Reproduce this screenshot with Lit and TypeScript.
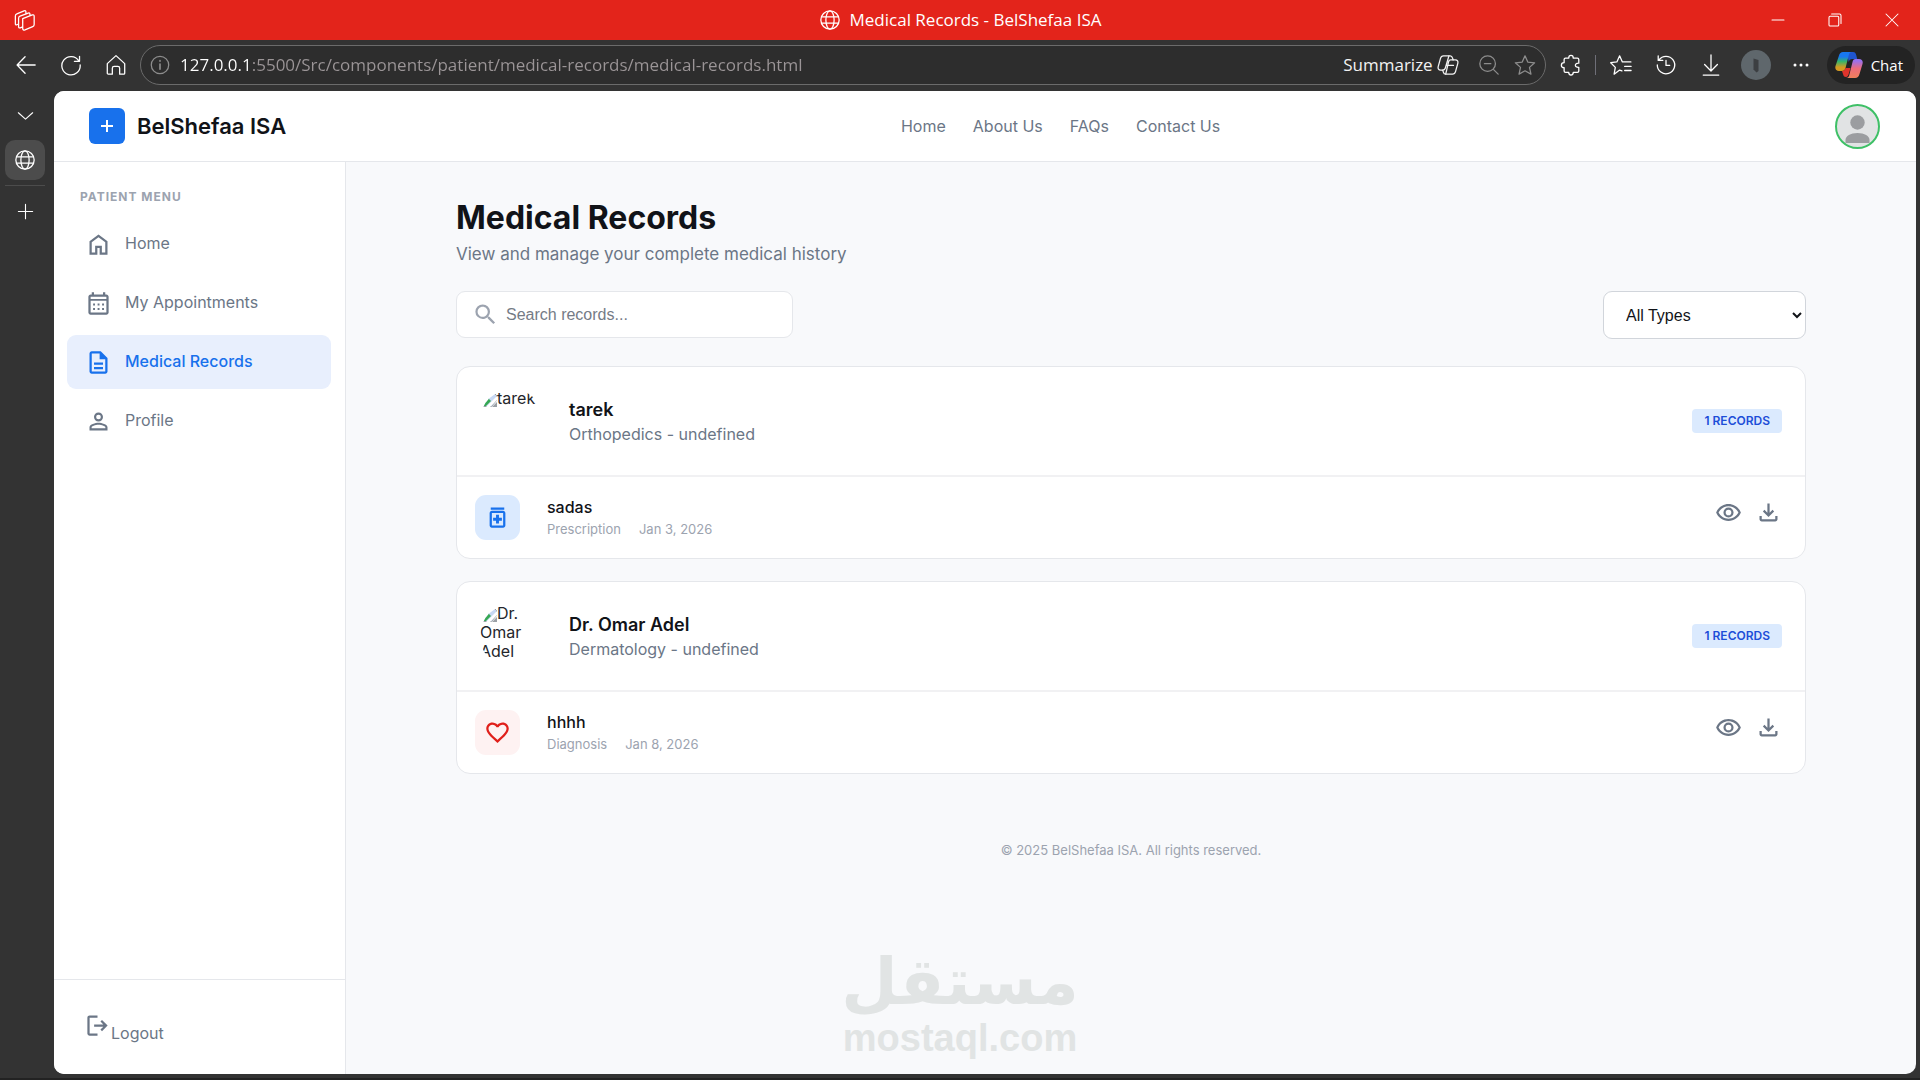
import { LitElement, html, svg, css, type TemplateResult } from "lit";
import { customElement, property } from "lit/decorators.js";
import { classMap } from "lit/directives/class-map.js";

const solid = (d: string) => html`<svg viewBox="0 0 24 24" fill="currentColor" aria-hidden="true"><path d=${d}></path></svg>`;
const line = (content: TemplateResult) =>
  html`<svg viewBox="0 0 24 24" fill="none" stroke="currentColor" stroke-width="1.4" stroke-linecap="round" stroke-linejoin="round" aria-hidden="true">${content}</svg>`;

const icons = {
  home: solid("M6 19h3v-6h6v6h3v-9l-6-4.5L6 10v9Zm-2 2V9l8-6 8 6v12h-7v-6h-2v6H4Z"),
  calendar: solid(
    "M19 4h-1V2h-2v2H8V2H6v2H5c-1.1 0-2 .9-2 2v14c0 1.1.9 2 2 2h14c1.1 0 2-.9 2-2V6c0-1.1-.9-2-2-2Zm0 16H5V9.5h14V20Zm0-12H5V6h14v2ZM7.2 12h1.7v1.7H7.2V12Zm4 0h1.7v1.7h-1.7V12Zm4 0h1.7v1.7h-1.7V12Zm-8 4h1.7v1.7H7.2V16Zm4 0h1.7v1.7h-1.7V16Zm4 0h1.7v1.7h-1.7V16Z"
  ),
  document: solid("M8 16h8v2H8v-2Zm0-4h8v2H8v-2Zm6-10H6c-1.1 0-2 .9-2 2v16c0 1.1.9 2 2 2h12c1.1 0 2-.9 2-2V8l-6-6Zm4 18H6V4h7v5h5v11Z"),
  person: solid(
    "M12 5.9a2.1 2.1 0 1 1 0 4.2 2.1 2.1 0 0 1 0-4.2m0 9c2.97 0 6.1 1.46 6.1 2.1v1.1H5.9V17c0-.64 3.13-2.1 6.1-2.1M12 4C9.79 4 8 5.79 8 8s1.79 4 4 4 4-1.79 4-4-1.79-4-4-4Zm0 9c-2.67 0-8 1.34-8 4v3h16v-3c0-2.66-5.33-4-8-4Z"
  ),
  logout: solid("M5 21q-.825 0-1.413-.587T3 19V5q0-.825.587-1.413T5 3h7v2H5v14h7v2H5Zm11-4-1.375-1.45 2.55-2.55H9v-2h8.175l-2.55-2.55L16 7l5 5-5 5Z"),
  search: solid(
    "M15.5 14h-.79l-.28-.27A6.47 6.47 0 0 0 16 9.5 6.5 6.5 0 1 0 9.5 16c1.61 0 3.09-.59 4.23-1.57l.27.28v.79l5 4.99L20.49 19l-4.99-5Zm-6 0C7.01 14 5 11.99 5 9.5S7.01 5 9.5 5 14 7.01 14 9.5 11.99 14 9.5 14Z"
  ),
  medication: solid("M6 3h12v2H6V3Zm11 3H7c-1.1 0-2 .9-2 2v11c0 1.1.9 2 2 2h10c1.1 0 2-.9 2-2V8c0-1.1-.9-2-2-2Zm0 13H7V8h10v11ZM10.7 9.6h2.6v2.6h2.6v2.6h-2.6v2.6h-2.6v-2.6H8.100v-2.6h2.6V9.6Z"),
  heart: solid(
    "M16.5 3c-1.74 0-3.41.81-4.5 2.09C10.91 3.81 9.24 3 7.5 3 4.42 3 2 5.42 2 8.5c0 3.78 3.4 6.860 8.55 11.54L12 21.35l1.45-1.32C18.600 15.36 22 12.280 22 8.500 22 5.420 19.580 3 16.500 3Zm-4.4 15.550-.1.100-.1-.100C7.140 14.240 4 11.390 4 8.500 4 6.500 5.500 5 7.500 5c1.540 0 3.040.990 3.570 2.360h1.870C13.460 5.990 14.960 5 16.500 5c2 0 3.500 1.500 3.500 3.500 0 2.890-3.140 5.740-7.900 10.050Z"
  ),
  eye: solid(
    "M12 6.500c3.790 0 7.170 2.130 8.820 5.500-1.650 3.370-5.020 5.500-8.820 5.500S4.830 15.370 3.180 12C4.830 8.630 8.210 6.500 12 6.500m0-2C7 4.500 2.730 7.610 1 12c1.730 4.390 6 7.500 11 7.500s9.270-3.110 11-7.500c-1.730-4.390-6-7.500-11-7.500Zm0 5a2.500 2.500 0 0 1 0 5 2.500 2.500 0 0 1 0-5m0-2a4.500 4.500 0 1 0 0 9 4.500 4.500 0 0 0 0-9Z"
  ),
  download: solid("M12 16l-5-5 1.400-1.450 2.600 2.600V4h2v8.150l2.600-2.600L17 11l-5 5Zm-6 4q-.825 0-1.413-.588T4 18v-3h2v3h12v-3h2v3q0 .825-.588 1.413T18 20H6Z"),
  globe: line(svg`<circle cx="12" cy="12" r="10"/><ellipse cx="12" cy="12" rx="4.500" ry="10"/><path d="M2.800 8.500h18.400M2.800 15.500h18.400"/>` as TemplateResult),
  back: line(svg`<path d="M22 12H2.500M11 3 2.300 12 11 21"/>` as TemplateResult),
  refresh: line(svg`<path d="M20.500 7.500A10 10 0 1 0 22 12M21.300 2.500v5.500h-5.600"/>` as TemplateResult),
  house: line(svg`<path d="M2.500 10.500 12 1.800l9.500 8.700V21a1 1 0 0 1-1 1H16v-6.500a2 2 0 0 0-2-2h-4a2 2 0 0 0-2 2V22H3.500a1 1 0 0 1-1-1Z"/>` as TemplateResult),
  info: line(svg`<circle cx="12" cy="12" r="9.500"/><path d="M12 11v5.500M12 7.300v.5" stroke-width="1.800"/>` as TemplateResult),
  chevron: line(svg`<path d="M3 8.500l9 8 9-8"/>` as TemplateResult),
  plus: line(svg`<path d="M12 3v18M3 12h18"/>` as TemplateResult),
  zoomOut: line(svg`<circle cx="10.500" cy="10.500" r="8.500"/><path d="M17 17l5 5M7 10.500h7"/>` as TemplateResult),
  star: line(svg`<path d="M12 2l3 6.800 7.500.8-5.600 5 1.600 7.400L12 18.300 5.500 22l1.600-7.400-5.600-5L9 8.800Z"/>` as TemplateResult),
  puzzle: line(
    svg`<path d="M6 4.500h3.500c0-4 5-4 5 0H19a1.500 1.500 0 0 1 1.500 1.500v4c-5-.5-5 5 0 4.500v4A1.500 1.500 0 0 1 19 20h-4.500c0 4-5 4-5 0H6a1.500 1.500 0 0 1-1.500-1.500V15c-4 0-4-5.500 0-5.500V6A1.500 1.500 0 0 1 6 4.500Z"/>` as TemplateResult
  ),
  favorites: line(svg`<path d="M13 18.500 10.500 17.500 4.500 22l1.300-7.400L.8 9.500l6.700-.8L10.500 2l3 6.700h9.300M16 13.500h7M16 18h7"/>` as TemplateResult),
  history: line(svg`<path d="M4.300 6.500A9.500 9.500 0 1 1 2.500 12M3.500 2v5H8.500M12 7v5.500h4"/>` as TemplateResult),
  save: line(svg`<path d="M12 1v17M5 11.500l7 7 7-7M3.500 23h17"/>` as TemplateResult),
  dots: html`<svg viewBox="0 0 24 24" fill="currentColor" aria-hidden="true"><circle cx="4" cy="12" r="2"></circle><circle cx="12" cy="12" r="2"></circle><circle cx="20" cy="12" r="2"></circle></svg>`,
  copilot: line(
    svg`<path d="M7 2h7.500c1.500 0 2 .9 2.500 2.500l.6 2H20c2.200 0 3.300 1.600 2.700 3.700l-2.500 9C19.600 21.200 18.500 22 17 22H9.500C8 22 7.300 21.200 7 20l-.8-2.500H4c-2.200 0-3.300-1.600-2.700-3.700l2.500-9C4.300 2.900 5.500 2 7 2Z"/><path d="M13 2 9 15.500c-.4 1.300-1.200 2-2.800 2M17.600 6.500H15c-1.400 0-2 .8-2.400 2L9.500 22M11 12.500h7"/>` as TemplateResult
  ),
  minimize: line(svg`<path d="M4 12h16"/>` as TemplateResult),
  restore: line(svg`<rect x="4" y="7" width="13" height="13" rx="1.500"/><path d="M7.500 4H18a2 2 0 0 1 2 2v10.500"/>` as TemplateResult),
  close: line(svg`<path d="M4 4l16 16M20 4 4 20"/>` as TemplateResult),
  workspaces: line(
    svg`<path d="M9.500 10.500 20 6.500c1.300-.4 2 0 2 1.300V17c0 1.200-.5 1.900-1.600 2.300L12 22.800c-1.400.5-2.500 0-2.500-1.600ZM9.500 19.500 6.800 20.500c-1.200.4-1.800-.1-1.800-1.400V10c0-1.200.5-1.800 1.600-2.200L15.500 4.500c1.200-.4 1.900 0 1.900 1.200v1.600M5 16.500l-2 .7c-1 .3-1.500-.1-1.500-1.200V7.500c0-1.200.5-1.800 1.600-2.200L11 2c1.200-.4 2-.1 2 1.200v2"/>` as TemplateResult
  ),
};

const copilotColor = html`<svg class="copilot" viewBox="0 0 28 28" aria-hidden="true">
  <defs>
    <linearGradient id="cool" x1="0" y1="0" x2="0" y2="1">
      <stop offset="0.25" stop-color="#1878f0"></stop><stop offset="0.5" stop-color="#35b56a"></stop><stop offset="0.8" stop-color="#d59b22"></stop>
    </linearGradient>
    <linearGradient id="warm" x1="0" y1="0" x2="0" y2="1">
      <stop offset="0.1" stop-color="#9a70ee"></stop><stop offset="0.5" stop-color="#ee6c7c"></stop><stop offset="1" stop-color="#f0805a"></stop>
    </linearGradient>
  </defs>
  <path fill="#1f55cf" d="M12 1h6c2 0 2.700 1 3.200 3l1 4h-5c-2 0-3 1-3.500 3Z"></path>
  <path fill="url(#cool)" d="M8 1h9c-2 0-2.700 1.200-3.200 3L10.500 17c-.6 2-1.500 3-3.500 3H4c-2.700 0-4.300-2-3.500-5L4 4.500C4.600 2.300 6 1 8 1Z"></path>
  <path fill="#e0342c" d="M7 20c2 0 3-1 3.500-3h5L14 22c-.6 2.500-1.500 4-3 4-2 0-2.500-1-3-3Z"></path>
  <path fill="url(#warm)" d="M20.500 8H24c3 0 4.300 2 3.500 5L24.500 23c-.7 2.500-2 4-4.500 4h-9c2 0 2.800-1.300 3.300-3l3.200-13c.5-2 1.200-3 3-3Z"></path>
</svg>`;

const brokenPicture = html`<svg class="broken" viewBox="0 0 16 16" aria-hidden="true">
  <path fill="#c7d8f4" stroke="#9aa0a6" d="M.5.500h11l4 4v5l-5 6h-10Z"></path>
  <path fill="#36a853" d="M1 15V11l5-5 4 4-5 5Z"></path>
  <path fill="#fff" d="M5 16 16 5v4l-7 7Z"></path>
  <path fill="#9aa0a6" d="M11 16l5-5v5Z"></path>
</svg>`;

interface MedicalRecord {
  title: string;
  kind: "Prescription" | "Diagnosis";
  date: string;
}

const reset = css`
  *, *::before, *::after { box-sizing: border-box; }
  button { border: 0; padding: 0; background: none; color: inherit; font: inherit; cursor: pointer; }
  a { color: inherit; text-decoration: none; }
  svg { display: block; flex: none; }
  h1, h2, h3, p, ul { margin: 0; padding: 0; }
`;

@customElement("record-card")
export class RecordCard extends LitElement {
  @property() doctor = "";
  @property() specialty = "";
  @property({ attribute: false }) records: MedicalRecord[] = [];

  static styles = [
    reset,
    css`
      :host { display: block; background: #fff; border: 1px solid #e5e7eb; border-radius: 14px; }
      .head { display: flex; align-items: center; padding: 22px 23px; border-bottom: 2px solid #f1f1f3; }
      .photo { width: 64px; height: 64px; border-radius: 50%; overflow: hidden; margin-right: 25px; font-size: 16px; line-height: 19px; color: #24262b; }
      .broken { display: inline-block; width: 16px; height: 16px; vertical-align: -3px; margin-left: 1px; }
      .who { flex: 1; padding-top: 2px; }
      h2 { font-size: 18px; font-weight: 600; line-height: 24px; color: #111318; }
      .who p { font-size: 16px; line-height: 24px; color: #6b7686; }
      .badge { background: #dbeafe; color: #1d4ed8; border-radius: 4px; padding: 0 12px; font-size: 12px; font-weight: 600; line-height: 24px; text-transform: uppercase; }
      ul { list-style: none; }
      li { display: flex; align-items: center; padding: 18px; }
      .tile { display: grid; place-items: center; width: 45px; height: 45px; border-radius: 11px; background: #dbeafe; color: #1871ec; margin-right: 27px; }
      .tile.diagnosis { background: #fef2f2; color: #e0201b; }
      svg { width: 27px; height: 27px; }
      .body { flex: 1; }
      h3 { font-size: 16px; font-weight: 500; line-height: 22px; color: #111318; }
      .meta { display: flex; gap: 18px; font-size: 13px; line-height: 22px; color: #9ca3af; }
      .actions { display: flex; align-self: flex-start; gap: 13px; padding: 4px 5px 0 0; color: #6b7686; }
    `,
  ];

  render() {
    return html`
      <div class="head">
        <div class="photo">${brokenPicture}${this.doctor}</div>
        <div class="who">
          <h2>${this.doctor}</h2>
          <p>${this.specialty}</p>
        </div>
        <span class="badge">${this.records.length} Records</span>
      </div>
      <ul>
        ${this.records.map(
          (r) => html`<li>
            <span class=${classMap({ tile: true, diagnosis: r.kind === "Diagnosis" })}>${r.kind === "Diagnosis" ? icons.heart : icons.medication}</span>
            <div class="body">
              <h3>${r.title}</h3>
              <p class="meta"><span>${r.kind}</span><span>${r.date}</span></p>
            </div>
            <div class="actions">
              <button aria-label="View record">${icons.eye}</button>
              <button aria-label="Download record">${icons.download}</button>
            </div>
          </li>`
        )}
      </ul>
    `;
  }
}

@customElement("records-page")
export class RecordsPage extends LitElement {
  private doctors = [
    { name: "tarek", specialty: "Orthopedics - undefined", records: [{ title: "sadas", kind: "Prescription", date: "Jan 3, 2026" }] as MedicalRecord[] },
    { name: "Dr. Omar Adel", specialty: "Dermatology - undefined", records: [{ title: "hhhh", kind: "Diagnosis", date: "Jan 8, 2026" }] as MedicalRecord[] },
  ];
  private menu = [
    { label: "Home", icon: icons.home },
    { label: "My Appointments", icon: icons.calendar },
    { label: "Medical Records", icon: icons.document, active: true },
    { label: "Profile", icon: icons.person },
  ];

  static styles = [
    reset,
    css`
      :host { display: flex; flex-direction: column; background: #f8f9fb; color: #6b7686; font-family: Inter, sans-serif; font-size: 16px; }
      header { display: flex; justify-content: space-between; align-items: center; height: 71px; padding: 0 36px 0 35px; background: #fff; border-bottom: 1px solid #e5e7eb; }
      .brand { display: flex; align-items: center; gap: 12px; font-size: 22px; font-weight: 600; color: #111318; }
      .logo { display: grid; place-items: center; width: 36px; height: 36px; border-radius: 6px; background: #1871ec; color: #fff; }
      .logo svg { width: 16px; height: 16px; }
      .links { display: flex; gap: 27px; }
      .avatar { border-radius: 50%; }
      .avatar svg { width: 45px; height: 45px; }
      .columns { flex: 1; display: grid; grid-template-columns: 292px 1fr; }
      aside { display: flex; flex-direction: column; background: #fff; border-right: 1px solid #e5e7eb; }
      .caption { padding: 25px 26px 0; font-size: 12px; font-weight: 700; line-height: 20px; letter-spacing: 1px; color: #9ca3af; }
      .menu { display: flex; flex-direction: column; gap: 5px; padding: 10px 14px 10px 13px; flex: 1; }
      .menu a { display: flex; align-items: center; gap: 13px; height: 54px; padding: 0 18px; border-radius: 9px; }
      .menu a span { padding-bottom: 3px; }
      .menu a.active { background: #e8effd; color: #1871ec; font-weight: 500; }
      .menu svg, .exit svg, .search svg { width: 27px; height: 27px; }
      .exit { border-top: 1px solid #e5e7eb; height: 95px; padding: 32px 30px; }
      .exit a { display: inline-flex; align-items: flex-start; }
      .exit span { padding-top: 11px; }
      main { padding: 36px 110px; }
      h1 { font-size: 32px; line-height: 40px; font-weight: 700; color: #111318; }
      .lead { margin-top: 4px; font-size: 17px; line-height: 24px; }
      .filters { display: flex; justify-content: space-between; align-items: flex-start; margin: 25px 0 27px; }
      .search { display: flex; align-items: center; width: 337px; height: 47px; padding: 0 15px; gap: 7px; background: #fff; border: 1px solid #e5e7eb; border-radius: 9px; color: #9ca3af; }
      input { flex: 1; min-width: 0; border: 0; padding: 0; outline: 0; background: none; font: 16px "Liberation Sans", Arial, sans-serif; color: #111318; }
      input::placeholder { color: #757b86; }
      select { width: 203px; height: 48px; padding: 0 18px; border: 1px solid #d1d5db; border-radius: 9px; background: #fff; font: 16px "Liberation Sans", Arial, sans-serif; color: #111318; }
      .cards { display: grid; gap: 22px; }
      footer { padding-top: 66px; text-align: center; font-size: 13px; line-height: 20px; color: #9ca3af; }
    `,
  ];

  render() {
    return html`
      <header>
        <a class="brand" href="#"><span class="logo"><svg viewBox="0 0 16 16" stroke="#fff" stroke-width="2" aria-hidden="true"><path d="M8 2v12M2 8h12"></path></svg></span>BelShefaa ISA</a>
        <nav class="links">
          <a href="#">Home</a><a href="#">About Us</a><a href="#">FAQs</a><a href="#">Contact Us</a>
        </nav>
        <button class="avatar" aria-label="Account">
          <svg viewBox="0 0 45 45" aria-hidden="true">
            <circle cx="22.500" cy="22.500" r="21.500" fill="#e1e3e4" stroke="#3fc067" stroke-width="2"></circle>
            <circle cx="22.500" cy="18.500" r="7.200" fill="#9b9da0"></circle>
            <path d="M10.500 39v-3c0-4 5-7 12-7s12 3 12 7v3Z" fill="#9b9da0"></path>
          </svg>
        </button>
      </header>
      <div class="columns">
        <aside>
          <p class="caption">PATIENT MENU</p>
          <nav class="menu">
            ${this.menu.map((m) => html`<a href="#" class=${classMap({ active: !!m.active })}>${m.icon}<span>${m.label}</span></a>`)}
          </nav>
          <div class="exit"><a href="#">${icons.logout}<span>Logout</span></a></div>
        </aside>
        <main>
          <h1>Medical Records</h1>
          <p class="lead">View and manage your complete medical history</p>
          <div class="filters">
            <label class="search">${icons.search}<input type="search" placeholder="Search records..." aria-label="Search records" /></label>
            <select aria-label="Record type"><option>All Types</option><option>Prescription</option><option>Diagnosis</option></select>
          </div>
          <div class="cards">
            ${this.doctors.map((d) => html`<record-card .doctor=${d.name} .specialty=${d.specialty} .records=${d.records}></record-card>`)}
          </div>
          <footer>© 2025 BelShefaa ISA. All rights reserved.</footer>
        </main>
      </div>
    `;
  }
}

@customElement("app-root")
export class AppRoot extends LitElement {
  static styles = [
    reset,
    css`
      :host { position: relative; display: flex; flex-direction: column; min-height: 100vh; background: #333; color: #fff; font-family: "Segoe UI", "Open Sans", sans-serif; font-size: 16px; border-bottom: 2px solid #222; box-sizing: border-box; }
      svg { width: 22px; height: 22px; }
      .titlebar { display: grid; grid-template-columns: 1fr auto 1fr; align-items: center; height: 40px; background: #e3241b; }
      .titlebar > button { justify-self: start; margin-left: 14px; }
      .title { display: flex; align-items: center; gap: 9px; font-size: 17px; line-height: 22px; }
      .window { justify-self: end; display: flex; }
      .window button { display: grid; place-items: center; width: 57px; height: 40px; }
      .window svg { width: 18px; height: 18px; }
      .toolbar { display: flex; align-items: center; height: 51px; padding: 0 5px 1px 3px; }
      .tool { display: grid; place-items: center; width: 45px; height: 40px; }
      .address { flex: 1; display: flex; align-items: center; height: 40px; margin: 0 3px 0 2px; padding: 0 2px 0 8px; border: 1px solid #6b6b6b; border-radius: 20px; background: #2d2d2d; color: #8d8d8d; }
      .address input { flex: 1; min-width: 0; height: 36px; border: 0; outline: 0; padding: 0 0 2px 9px; font: inherit; font-size: 17px; color: transparent; background: linear-gradient(90deg, #fff 79px, #9b9597 79px); -webkit-background-clip: text; background-clip: text; }
      .summarize { display: flex; align-items: center; gap: 4px; margin-right: 12px; color: #f2f2f2; font-size: 17px; line-height: 22px; }
      .address .icon { display: grid; place-items: center; width: 36px; height: 36px; }
      .rule { width: 1px; height: 20px; background: #6f6f78; margin: 0 3px 0 1px; }
      .profile svg { width: 30px; height: 30px; }
      .more svg { width: 18px; height: 18px; }
      .chat { display: flex; align-items: center; gap: 8px; height: 38px; margin-left: 3px; padding: 0 12px 0 8px; border-radius: 19px; background: #232323; font-size: 15px; }
      .copilot { width: 28px; height: 28px; }
      .frame { flex: 1; display: grid; grid-template-columns: 54px 1fr; padding: 0 4px 4px 0; }
      .rail { display: flex; flex-direction: column; align-items: center; padding-right: 4px; }
      .rail button { display: grid; place-items: center; width: 40px; height: 49px; }
      .rail .current { height: 40px; border-radius: 10px; background: #4c4c4c; }
      .rail hr { width: 40px; margin: 5px 0 1px; border: 0; border-top: 1px solid #4c4c4c; }
      .rail .small svg { width: 19px; height: 19px; }
      records-page { border-radius: 10px; overflow: hidden; }
      .mark { position: absolute; left: 0; right: 0; bottom: 20px; display: flex; flex-direction: column; align-items: center; color: #e1e4e4; pointer-events: none; }
      .mark .ar { font: 700 65px/72px "DejaVu Sans", sans-serif; }
      .mark .en { font: 700 38px/40px "Liberation Sans", Arial, sans-serif; }
    `,
  ];

  render() {
    return html`
      <div class="titlebar">
        <button aria-label="Workspaces">${icons.workspaces}</button>
        <div class="title">${icons.globe}<span>Medical Records - BelShefaa ISA</span></div>
        <div class="window">
          <button aria-label="Minimize">${icons.minimize}</button>
          <button aria-label="Restore">${icons.restore}</button>
          <button aria-label="Close">${icons.close}</button>
        </div>
      </div>
      <div class="toolbar">
        <button class="tool" aria-label="Back">${icons.back}</button>
        <button class="tool" aria-label="Refresh">${icons.refresh}</button>
        <button class="tool" aria-label="Home">${icons.house}</button>
        <div class="address">
          ${icons.info}
          <input type="text" aria-label="Address" .value=${"127.0.0.1:5500/Src/components/patient/medical-records/medical-records.html"} />
          <button class="summarize">Summarize${icons.copilot}</button>
          <button class="icon" aria-label="Zoom out">${icons.zoomOut}</button>
          <button class="icon" aria-label="Add to favorites">${icons.star}</button>
        </div>
        <button class="tool" aria-label="Extensions">${icons.puzzle}</button>
        <span class="rule"></span>
        <button class="tool" aria-label="Favorites">${icons.favorites}</button>
        <button class="tool" aria-label="History">${icons.history}</button>
        <button class="tool" aria-label="Downloads">${icons.save}</button>
        <button class="tool profile" aria-label="Profile">
          <svg viewBox="0 0 30 30" aria-hidden="true"><circle cx="15" cy="15" r="15" fill="#5f676c"></circle><path d="M12.500 8.500 17.500 10v11l-2 1.500-3-3Z" fill="#3c3f42"></path></svg>
        </button>
        <button class="tool more" aria-label="More">${icons.dots}</button>
        <button class="chat">${copilotColor}Chat</button>
      </div>
      <div class="frame">
        <div class="rail">
          <button class="small" aria-label="Tab actions">${icons.chevron}</button>
          <button class="current" aria-label="Medical Records tab">${icons.globe}</button>
          <hr />
          <button class="small" aria-label="New tab">${icons.plus}</button>
        </div>
        <records-page></records-page>
      </div>
      <div class="mark"><span class="ar" lang="ar" dir="rtl">مستقل</span><span class="en">mostaql.com</span></div>
    `;
  }
}
